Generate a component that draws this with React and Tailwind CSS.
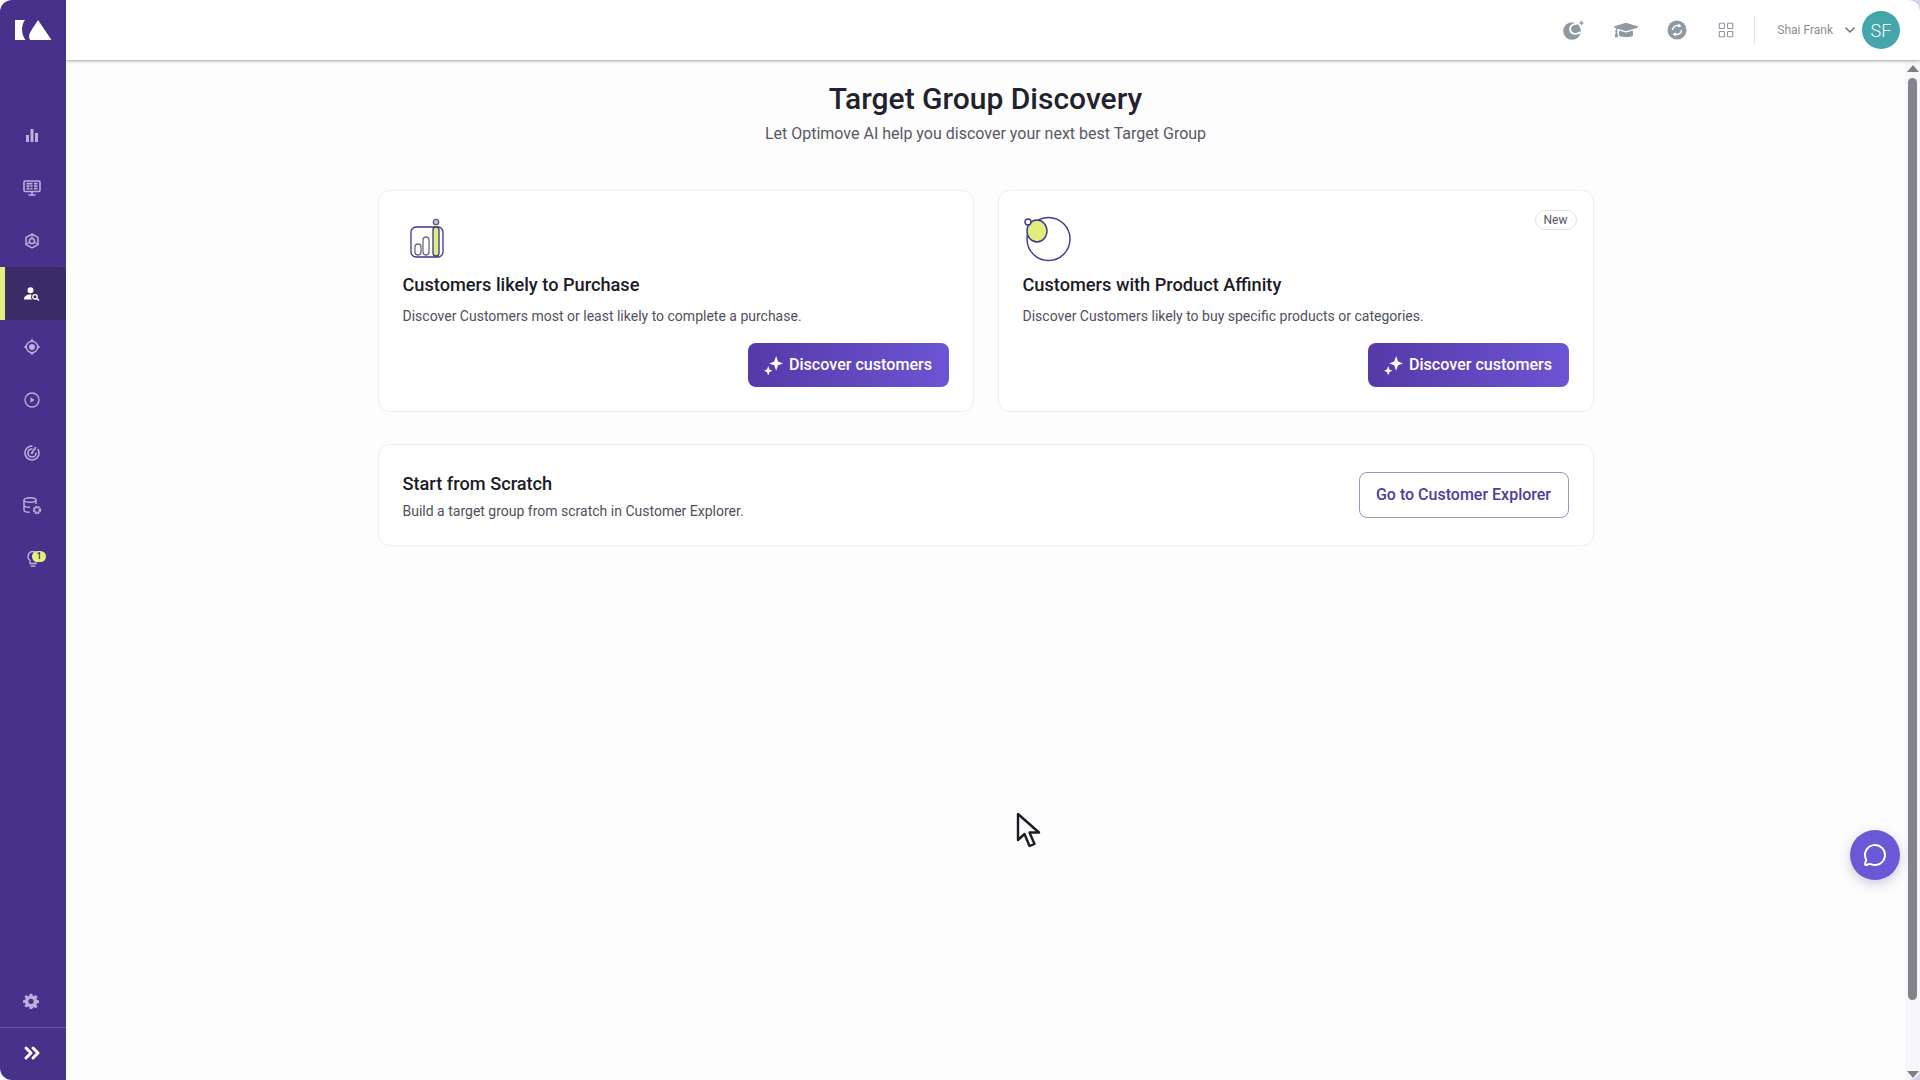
import React from 'react';
import { ChevronDown, ChevronsRight, LayoutGrid, MessageCircle } from 'lucide-react';
import { FaGraduationCap } from 'react-icons/fa';

const ChartIcon = () => (
  <svg width="14" height="14" viewBox="0 0 14 14" fill="currentColor">
    <rect x="1" y="7" width="3" height="7" />
    <rect x="5.5" y="1" width="3" height="13" />
    <rect x="10" y="5" width="3" height="9" />
  </svg>
);

const MonitorIcon = () => (
  <svg width="18" height="16" viewBox="0 0 18 16" fill="none" stroke="currentColor">
    <rect x="1" y="1" width="16" height="10.5" rx="1.2" strokeWidth="1.6" />
    <path d="M3.5 3.7h6M3.5 6.200h3M7.500 6.200h2M3.500 8.700h3M7.500 8.700h2M11 3.700h3.500M11 6.200h3.500M11 8.700h3.500" strokeWidth="1.800" />
    <path d="M9 12v2.500M5.500 15h7" strokeWidth="1.700" />
  </svg>
);

const HexIcon = () => (
  <svg width="16" height="16" viewBox="0 0 16 16" fill="none" stroke="currentColor" strokeWidth="1.500">
    <path d="M8 1l6 3.400v7.200L8 15l-6-3.400V4.400z" />
    <circle cx="8" cy="8" r="2.600" />
    <path d="M8 1.500v3.500M2.500 11l3.200-1.700M13.500 11l-3.200-1.700" strokeWidth="1.200" />
  </svg>
);

const UserSearchIcon = () => (
  <svg width="16" height="14" viewBox="0 0 16 14" fill="white">
    <circle cx="6.5" cy="3.2" r="3" />
    <path d="M0 12.5c0-3 2.500-5 6-5 .8 0 1.200.1 1.700.3-.9 1.200-.9 3.300.2 4.700z" />
    <circle cx="11" cy="9.800" r="2.200" fill="none" stroke="white" strokeWidth="1.300" />
    <path d="M12.700 11.500l2.300 2" stroke="white" strokeWidth="1.500" />
  </svg>
);

const TargetIcon = () => (
  <svg width="18" height="18" viewBox="0 0 18 18" fill="none" stroke="currentColor">
    <circle cx="9" cy="9" r="5.700" strokeWidth="1.400" />
    <circle cx="9" cy="9" r="3" fill="currentColor" stroke="none" />
    <path d="M9 .5L7.500 3h3zM9 17.500L7.500 15h3zM.5 9L3 7.500v3zM17.500 9L15 7.500v3z" fill="currentColor" stroke="none" />
  </svg>
);

const PlayIcon = () => (
  <svg width="16" height="16" viewBox="0 0 16 16" fill="none" stroke="currentColor" strokeWidth="1.300">
    <circle cx="8" cy="8" r="7" />
    <path d="M6.500 5.200L10.500 8l-4 2.800z" fill="currentColor" stroke="none" />
  </svg>
);

const RadarIcon = () => (
  <svg width="16" height="16" viewBox="0 0 16 16" fill="none" stroke="currentColor" strokeWidth="1.600" strokeLinecap="round">
    <path d="M8 1a7 7 0 1 0 7 7c0-1.300-.4-2.500-1-3.500" />
    <path d="M8 4a4 4 0 1 0 4 4" />
    <path d="M8 8l3.500-5.500" />
    <circle cx="8" cy="8" r="1.200" fill="currentColor" stroke="none" />
  </svg>
);

const DbGearIcon = () => (
  <svg width="19" height="18" viewBox="0 0 19 18" fill="none" stroke="currentColor" strokeWidth="1.400">
    <ellipse cx="7" cy="3" rx="6" ry="2.300" />
    <path d="M1 3v10c0 1.300 2.400 2.300 5.500 2.300M1 8c0 1.300 2.400 2.300 6 2.300M13 3v4" />
    <circle cx="14" cy="13" r="3" strokeWidth="2.400" strokeDasharray="1.900 .5" />
  </svg>
);

const BulbBadge = () => (
  <div className="relative w-[19px] h-[18px] ml-[9px] text-[#b9b1dc]">
    <svg width="12" height="18" viewBox="0 0 12 18" fill="none" stroke="currentColor" strokeWidth="1.400">
      <path d="M6 1.500a5 5 0 0 0-3 9v3h6v-3a5 5 0 0 0-3-9z" />
      <path d="M3.500 16h5" />
    </svg>
    <span className="absolute left-[5px] top-[1px] w-[14px] h-[11px] rounded-full bg-[#e3f07f] text-[#3b2c6e] text-[9px] leading-[11px] text-center font-medium">1</span>
  </div>
);

const GearIcon = () => (
  <svg width="16" height="16" viewBox="0 0 24 24" fill="currentColor">
    <path fillRule="evenodd" d="M10 1h4l.6 3.100 2 .8 2.600-1.800 2.800 2.800-1.800 2.600.8 2L24 11v4l-3.100.6-.8 2 1.800 2.600-2.800 2.800-2.600-1.800-2 .8L14 24h-4l-.6-3.100-2-.8-2.600 1.800-2.800-2.800 1.800-2.600-.8-2L0 15v-4l3.100-.6.8-2L2.100 5.800 4.900 3l2.600 1.800 2-.8zM12 8.500a4 4 0 1 0 0 8 4 4 0 0 0 0-8z" />
  </svg>
);

const LogoIcon = () => (
  <svg width="37" height="20" viewBox="0 0 37 20" fill="white">
    <path d="M0 0h10C6 5 6 14 10.500 20H0z" />
    <path d="M23 0L36.500 20H15C12 14 17 10 23 0z" />
  </svg>
);

const SwirlIcon = () => (
  <svg width="22" height="20" viewBox="0 0 22 20">
    <circle cx="9" cy="11" r="8.800" fill="#8f99a3" />
    <path d="M14 3.500C9 3.500 6 7 7.500 11c1.300 3.400 6 4 10 1" fill="none" stroke="white" strokeWidth="1.800" />
    <path d="M18.500 0l.8 2.200 2.200.8-2.200.8-.8 2.200-.8-2.200-2.200-.8 2.200-.8z" fill="#8f99a3" />
  </svg>
);

const SyncIcon = () => (
  <svg width="20" height="20" viewBox="0 0 20 20">
    <circle cx="10" cy="10" r="9.500" fill="#8f99a3" />
    <path d="M5.500 10a4.500 4.500 0 0 1 7-3.700M14.500 10a4.500 4.500 0 0 1-7 3.700" fill="none" stroke="white" strokeWidth="1.500" />
    <path d="M11.500 3.500l3 2.500-3.500 1.500zM8.500 16.500l-3-2.500 3.500-1.500z" fill="white" />
  </svg>
);

const SparkleIcon = () => (
  <svg width="19" height="19" viewBox="0 0 18 18" fill="white">
    <path d="M11.500 0l1.800 5.200L18 7l-4.700 1.800L11.500 14 9.700 8.800 5 7l4.700-1.800z" />
    <path d="M4 9.500l1.200 3.300L8 14l-2.800 1.200L4 18.500l-1.200-3.300L0 14l2.800-1.200z" />
  </svg>
);

const BarsPicture = () => (
  <svg width="48" height="48" viewBox="0 0 48 48" fill="none" stroke="#43358c" strokeWidth="1.300">
    <rect x="8" y="12" width="32" height="30" rx="5" />
    <rect x="12" y="29" width="6" height="11" rx="3" stroke="#6b6a8c" />
    <rect x="20" y="22" width="6" height="18" rx="3" stroke="#6b6a8c" />
    <rect x="30" y="12" width="6" height="29" rx="3" fill="#e1ee7e" />
    <circle cx="33" cy="7" r="2.700" fill="#c9c9d3" stroke="#5e5d78" />
  </svg>
);

const CirclesPicture = () => (
  <svg width="48" height="48" viewBox="0 0 48 48" fill="none" stroke="#43358c" strokeWidth="1.400">
    <circle cx="25.500" cy="24" r="21.500" />
    <ellipse cx="14" cy="16" rx="10" ry="11" fill="#e1ee7e" />
    <circle cx="5" cy="7" r="3" fill="white" />
  </svg>
);

const CursorIcon = () => (
  <svg width="26" height="38" viewBox="0 0 26 38">
    <path d="M2 2v26l6.500-6 5 12 5-2-5-11.500H23z" fill="#fbfaff" stroke="#1c1c22" strokeWidth="2.400" strokeLinejoin="round" />
  </svg>
);

const navItems = [
  <ChartIcon />,
  <MonitorIcon />,
  <HexIcon />,
  <UserSearchIcon />,
  <TargetIcon />,
  <PlayIcon />,
  <RadarIcon />,
  <DbGearIcon />,
  <BulbBadge />,
];

const Sidebar = () => (
  <div className="bg-white h-full">
    <aside className="w-[66px] h-full bg-[#47318b] rounded-l-[12px] flex flex-col text-[#b9b1dc]">
      <div className="h-[60px] flex items-center justify-center">
        <LogoIcon />
      </div>
      <nav className="pt-[48px] flex flex-col">
        {navItems.map((icon, i) => (
          <div
            key={i}
            className={i === 3
              ? 'h-[53px] flex items-center justify-center pr-[7px] bg-[#3a2c69] border-l-[5px] border-[#e3f07f] rounded-tr-[6px]'
              : 'h-[53px] flex items-center justify-center pr-[2px]'}
          >
            {icon}
          </div>
        ))}
      </nav>
      <div className="mt-auto flex flex-col">
        <div className="h-[53px] flex items-center justify-center pr-[4px] border-b border-[#6a57a3]">
          <GearIcon />
        </div>
        <div className="h-[52px] flex items-center justify-center text-white pb-[3px] pr-[2px]">
          <ChevronsRight size={24} strokeWidth={3} />
        </div>
      </div>
    </aside>
  </div>
);

const Header = () => (
  <header className="h-[60px] shrink-0 bg-white shadow-[0_1px_3px_rgba(60,60,70,0.45)] flex items-center justify-end pr-[20px] relative z-10">
    <div className="flex items-center text-[#8f99a3] pb-[1px]">
      <div className="w-[24px] flex justify-center mr-[28px]"><SwirlIcon /></div>
      <div className="w-[24px] flex justify-center mr-[27px]"><FaGraduationCap size={24} /></div>
      <div className="w-[24px] flex justify-center mr-[25px]"><SyncIcon /></div>
      <div className="w-[24px] flex justify-center mr-[16px]"><LayoutGrid size={18} strokeWidth={1.5} /></div>
    </div>
    <div className="w-px h-[28px] bg-[#e4e6ea] mr-[22px]" />
    <span className="text-[12px] text-[#8a8f96] mr-[9px]">Shai Frank</span>
    <ChevronDown size={16} strokeWidth={2.4} className="text-[#6f757c] mr-[4px]" />
    <div className="w-[38px] h-[38px] rounded-full bg-[#44a5ab] text-white text-[18px] font-light flex items-center justify-center">SF</div>
  </header>
);

const DiscoverButton = () => (
  <button className="h-[44px] w-[201px] rounded-[8px] bg-gradient-to-r from-[#5639a8] to-[#6b55d4] text-white text-[16.1px] font-medium flex items-center justify-center gap-[6px]">
    <SparkleIcon />
    Discover customers
  </button>
);

const Card = ({ picture, title, detail, badge }) => (
  <div className="relative h-[222px] rounded-[12px] border border-[#eeeef3] bg-white px-[24px] pt-[24px]">
    {badge && (
      <span className="absolute right-[16px] top-[19px] h-[20px] px-[8px] rounded-full border border-[#e3e3e6] text-[12px] leading-[18px] text-[#55555f]">
        {badge}
      </span>
    )}
    <div className="h-[48px] flex items-start">{picture}</div>
    <h2 className="mt-[10px] text-[18.2px] leading-[24px] font-medium text-[#1b1b26]">{title}</h2>
    <p className="mt-[9px] text-[14px] leading-[20px] text-[#50505c]">{detail}</p>
    <div className="mt-[17px] flex justify-end">
      <DiscoverButton />
    </div>
  </div>
);

const App = () => {
  return (
    <div className="relative w-screen h-screen overflow-hidden flex bg-[#d6d2ee] font-['Roboto',sans-serif]">
      <Sidebar />
      <div className="flex-1 min-w-0 flex flex-col bg-[#fdfdfe] rounded-r-[12px] overflow-hidden">
        <Header />
        <div className="flex-1 min-h-0 flex">
          <main className="flex-1 min-w-0 flex flex-col items-center pt-[20px]">
            <h1 className="text-[30px] leading-[38px] font-medium text-[#22222e]">Target Group Discovery</h1>
            <p className="mt-[4px] text-[16px] leading-[24px] text-[#585864]">
              Let Optimove AI help you discover your next best Target Group
            </p>
            <div className="mt-[44px] w-[1216px] flex flex-col gap-[32px]">
              <div className="grid grid-cols-2 gap-[24px]">
                <Card
                  picture={<BarsPicture />}
                  title="Customers likely to Purchase"
                  detail="Discover Customers most or least likely to complete a purchase."
                />
                <Card
                  picture={<CirclesPicture />}
                  title="Customers with Product Affinity"
                  detail="Discover Customers likely to buy specific products or categories."
                  badge="New"
                />
              </div>
              <div className="h-[102px] rounded-[12px] border border-[#eeeef3] bg-white pl-[24px] pr-[24px] flex items-center justify-between">
                <div className="pt-[2px]">
                  <h2 className="text-[18.2px] leading-[24px] font-medium text-[#1b1b26]">Start from Scratch</h2>
                  <p className="mt-[5px] text-[14px] leading-[20px] text-[#50505c]">Build a target group from scratch in Customer Explorer.</p>
                </div>
                <button className="h-[46px] w-[210px] rounded-[8px] border border-[#9d93c9] text-[16px] font-medium text-[#4f3d9f] bg-white">
                  Go to Customer Explorer
                </button>
              </div>
            </div>
          </main>
          <div className="w-[15px] shrink-0 flex flex-col items-center bg-[#f7f6fb] pb-[2px]">
            <div className="mt-[5px] w-0 h-0 border-x-[6px] border-x-transparent border-b-[7px] border-b-[#7f7d86]" />
            <div className="mt-[6px] w-[9px] h-[922px] rounded-full bg-[#84828b]" />
            <div className="mt-auto w-0 h-0 border-x-[6px] border-x-transparent border-t-[7px] border-t-[#7f7d86]" />
          </div>
        </div>
      </div>
      <div className="absolute left-[1850px] top-[830px] w-[50px] h-[50px] rounded-full bg-[#6a58d6] shadow-[0_4px_12px_rgba(60,50,120,0.25)] flex items-center justify-center text-white">
        <MessageCircle size={24} strokeWidth={2} />
      </div>
      <div className="absolute left-[1016px] top-[812px]">
        <CursorIcon />
      </div>
    </div>
  );
};

export default App;
